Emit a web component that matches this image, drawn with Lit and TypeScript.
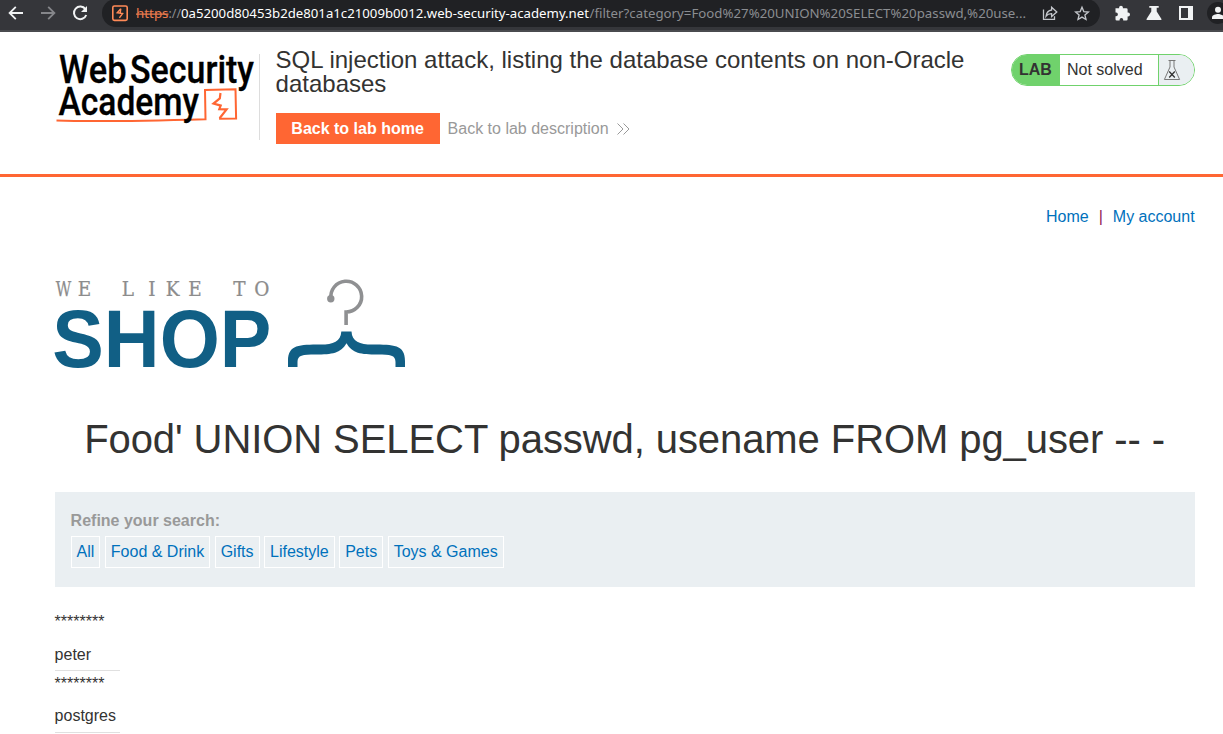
import { LitElement, html, css } from "lit";
import { customElement } from "lit/decorators.js";

/** Dark browser toolbar with navigation, address and extension buttons. */
@customElement("browser-bar")
class BrowserBar extends LitElement {
  static styles = css`
    :host { display: block; height: 32px; overflow: hidden; background: #35363a; }
    svg { display: block; }
    .ui { font-family: "Noto Sans", "Open Sans", sans-serif; font-size: 13.3px; }
  `;
  render() {
    return html`
      <svg width="1223" height="32" viewBox="0 0 1223 32" fill="none">
        <rect y="30" width="1223" height="2" fill="#4a4b4f" />
        <rect x="102" y="-1" width="998" height="28" rx="14" fill="#202124" />
        <g stroke="#f1f3f4" stroke-width="1.8">
          <path d="M23 13H10M15.8 6.8 9.6 13l6.2 6.2" />
          <path d="M41 13h13M48.2 6.8l6.2 6.2-6.2 6.2" stroke="#85868a" />
          <path d="M85.4 9.2A6.3 6.3 0 1 0 86.2 15" stroke-width="2" />
        </g>
        <path d="M87 6v6h-6z" fill="#f1f3f4" />
        <rect x="112.8" y="6" width="14.4" height="14.4" rx="1.6" stroke="#ff8a57" stroke-width="1.6" />
        <path d="m120.800 8.600-3.600 4.200 5.400.700-3.200 4.300M120.800 8.600l-.6 4.600" stroke="#ff8a57" stroke-width="1.4" />
        <g class="ui">
          <text x="136" y="18" textLength="32.5" lengthAdjust="spacingAndGlyphs" fill="#ee7c4e">https</text>
          <path d="M136 14.2h32.5" stroke="#ee7c4e" stroke-width="1.3" />
          <text x="168.5" y="18" textLength="12.5" lengthAdjust="spacingAndGlyphs" fill="#8b8d91">://</text>
          <text x="181" y="18" textLength="408" lengthAdjust="spacingAndGlyphs" fill="#fff">0a5200d80453b2de801a1c21009b0012.web-security-academy.net</text>
          <text x="589.5" y="18" textLength="436.5" lengthAdjust="spacingAndGlyphs" fill="#8b8d91">/filter?category=Food%27%20UNION%20SELECT%20passwd,%20use...</text>
        </g>
        <g stroke="#c4c7cc" stroke-width="1.3">
          <path d="M1043.5 9.500v9.800h11v-3" />
          <path d="M1051.600 7.200l5.200 4.700-5.200 4.600v-2.800c-2.700 0-4.400.8-5.500 2.300.4-3.200 2.200-5.500 5.500-6z" />
          <path d="m1082 7.300 1.800 4.300 4.600.4-3.500 3 1.100 4.500-4-2.400-4 2.400 1.100-4.500-3.500-3 4.600-.4z" />
        </g>
        <g fill="#f1f3f4">
          <path d="M1115.500 8.300h3.600v-.7a1.900 1.900 0 0 1 3.800 0v.7h3.400a1.300 1.300 0 0 1 1.300 1.300v3h.5a1.900 1.900 0 0 1 0 3.800h-.5v2.800a1.300 1.300 0 0 1-1.300 1.300h-3.100v-.8a1.800 1.800 0 0 0-3.600 0v.8h-2.800a1.300 1.300 0 0 1-1.300-1.300v-3h.6a1.800 1.800 0 0 0 0-3.600h-.6v-3z" />
          <path d="M1149.300 6h9.400v1.800h-2v3.700l4.600 7.200c.5.800.1 1.400-.7 1.400h-13.200c-.8 0-1.200-.6-.7-1.400l4.600-7.200V7.800h-2z" />
          <path fill-rule="evenodd" d="M1179 6h14v14h-14zM1181 8v10h7V8z" />
        </g>
        <circle cx="1218" cy="13" r="11" fill="#202124" />
        <circle cx="1218" cy="9.800" r="3" fill="#f1f3f4" />
        <path d="M1212 19v-1.700c0-2.200 4-3.300 6-3.300s6 1.100 6 3.300V19z" fill="#f1f3f4" />
      </svg>
    `;
  }
}

/** Academy header: logo, lab title, links and status. */
@customElement("lab-header")
class LabHeader extends LitElement {
  static styles = css`
    :host { display: block; box-sizing: border-box; height: 145px; padding: 0 28px 0 55px; border-bottom: 3px solid #ff6633; }
    .row { display: flex; align-items: flex-start; padding-top: 16px; }
    .logo { flex: none; width: 204px; height: 92px; margin-top: 4px; }
    .logo svg { display: block; overflow: visible; }
    .word { font: 500 38px Roboto, sans-serif; fill: #000; stroke: #000; stroke-width: .3px; }
    .title { width: 710px; margin-left: 16.600px; }
    h2 { margin: 0; font-size: 24px; line-height: 24px; font-weight: 400; }
    .links { display: flex; align-items: center; margin-top: 17px; }
    .btn { box-sizing: border-box; width: 164px; height: 31px; line-height: 31px; text-align: center; background: #ff6633; color: #fff; font-weight: 700; }
    .back { margin-left: 8px; color: #999; }
    .chev { margin-left: 8px; }
    .status { display: flex; box-sizing: border-box; width: 184px; height: 32px; margin: 6px 0 0 auto; border: 1px solid #70d26c; border-radius: 16px; overflow: hidden; line-height: 30px; }
    .lab { width: 48px; box-sizing: border-box; padding-left: 7px; background: #70d26c; font-weight: 700; }
    .state { box-sizing: border-box; width: 98px; padding-left: 7px; }
    .flask { flex: 1; border-left: 1px solid #70d26c; background: #eaeff2; }
    .flask svg { display: block; }
  `;
  render() {
    return html`
      <div class="row">
        <div class="logo">
          <svg width="205" height="92" viewBox="55 52 205 92" fill="none">
            <text class="word" x="59" y="82.700" textLength="67.500" lengthAdjust="spacingAndGlyphs">Web</text>
            <text class="word" x="130" y="82.700" textLength="124" lengthAdjust="spacingAndGlyphs">Security</text>
            <path d="M56.500 120.600C100 122 150 120.800 205.500 119.200L205 90l30.500-.7.600 29.200-17 .3" stroke="#ff6633" stroke-width="2" />
            <text class="word" x="58.500" y="114.700" textLength="140.500" lengthAdjust="spacingAndGlyphs">Academy</text>
            <path d="m220.500 93-.7 5.400-6.300 5.200 7.200 2-1.400 3.600 7.300.2-7 8.800" stroke="#ff6633" stroke-width="2.200" />
            <path d="M259.500 54v86" stroke="#ddd" />
          </svg>
        </div>
        <div class="title">
          <h2>SQL injection attack, listing the database contents on non-Oracle databases</h2>
          <div class="links">
            <span class="btn">Back to lab home</span>
            <span class="back">Back to lab description</span>
            <svg class="chev" width="14" height="12" viewBox="0 0 14 12" fill="none" stroke="#999" stroke-width="1"><path d="m.5.500 5.500 5.500-5.500 5.500M6.500.500 12 6l-5.500 5.500" /></svg>
          </div>
        </div>
        <div class="status">
          <span class="lab">LAB</span>
          <span class="state">Not solved</span>
          <span class="flask">
            <svg width="34" height="30" viewBox="1159 55 34 30" fill="none" stroke="#777" stroke-width="1">
              <path d="M1168.500 60.500h7M1170 61v6l-5.600 12.500h15.200L1174 67v-6" />
              <path d="m1169.200 71.500 5.600 6M1174.800 71.500l-5.600 6" stroke="#333" stroke-width="1.300" />
            </svg>
          </span>
        </div>
      </div>
    `;
  }
}

/** Shop page: navigation, logo, heading, category filter and results. */
@customElement("shop-page")
class ShopPage extends LitElement {
  static styles = css`
    :host { display: block; padding: 0 28.400px 0 54.600px; }
    a { color: #0071bc; }
    nav { display: flex; justify-content: flex-end; padding-top: 31px; line-height: 18px; color: #931a55; }
    nav span { margin: 0 10px; }
    .brand { display: block; margin-top: 49px; overflow: visible; }
    .small { font-family: "DejaVu Serif", serif; font-size: 20.500px; fill: #8c8c8c; stroke: #8c8c8c; stroke-width: .25px; }
    .big { font: 700 81px "Liberation Sans", Arial, sans-serif; fill: #115f85; }
    h1 { margin: 39px 0 0; height: 60px; line-height: 60px; text-align: center; font-size: 40px; letter-spacing: -.08px; font-weight: 400; white-space: nowrap; }
    .filter { box-sizing: border-box; height: 95px; margin-top: 23px; padding: 20px 16px 0; background: #eaeff2; }
    .label { display: block; line-height: 18px; font-weight: 700; color: #999; }
    .cats { display: block; margin-top: 6px; }
    .cats a { display: inline-block; box-sizing: border-box; height: 32px; line-height: 30px; padding: 0 5px; border: 1px solid #fff; }
    .results { width: 65px; margin-top: 22px; }
    .item { box-sizing: border-box; height: 62px; padding-top: 4px; border-bottom: 1px solid #e0e0e0; line-height: 18px; }
    .name { margin-top: 15px; }
    .item + .item .name { margin-top: 14px; }
  `;
  render() {
    const cats = ["All", "Food & Drink", "Gifts", "Lifestyle", "Pets", "Toys & Games"];
    const users = ["peter", "postgres"];
    return html`
      <nav><a>Home</a><span>|</span><a>My account</a></nav>
      <svg class="brand" width="355" height="95" viewBox="55.2 274.8 355 95" fill="none">
        <text class="small" x="56" y="295.500" textLength="15.500" lengthAdjust="spacingAndGlyphs">W</text>
        <text class="small" transform="scale(.9 1)" y="295.500" x="86.700 135.600 164.900 184.400 209.400 259.400 282.800">ELIKETO</text>
        <text class="big" x="52.500" y="366.700" textLength="219" lengthAdjust="spacingAndGlyphs">SHOP</text>
        <path d="M331.200 298.500a15.400 15.400 0 1 1 15.100 13.300v13" stroke="#8f9092" stroke-width="3.600" />
        <circle cx="331" cy="298.600" r="3.700" fill="#8f9092" />
        <path d="M341.500 331.300h10.200c.5 10 8 13.100 21 13.100 21 .2 32.500 0 32.500 16.300v6h-9.500v-5c0-7-5-7.500-18-7.500-17 0-25-1-31-11.200-6 10.200-14 11.200-31 11.200-13 0-18 .5-18 7.500v5h-9.500v-6c0-16.300 11.500-16.100 32.500-16.300 13 0 20.300-3.100 20.800-13.100z" fill="#115f85" />
      </svg>
      <h1>Food' UNION SELECT passwd, usename FROM pg_user -- -</h1>
      <section class="filter">
        <span class="label">Refine your search:</span>
        <span class="cats">${cats.map((c) => html`<a>${c}</a> `)}</span>
      </section>
      <div class="results">
        ${users.map((u) => html`<div class="item"><div>********</div><div class="name">${u}</div></div>`)}
      </div>
    `;
  }
}

@customElement("app-root")
class AppRoot extends LitElement {
  static styles = css`
    :host { display: block; width: 1223px; height: 734px; overflow: hidden; background: #fff; color: #333332; font: 16px "Liberation Sans", Arial, sans-serif; }
  `;
  render() {
    return html`<browser-bar></browser-bar><lab-header></lab-header><shop-page></shop-page>`;
  }
}
